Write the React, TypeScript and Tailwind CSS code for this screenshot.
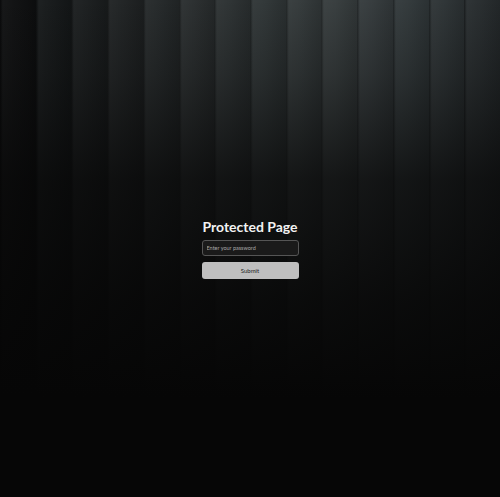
import { useState } from "react";

// top colour of each curtain fold, left → right
const STRIPES = [
  "bg-[#0e0f10]",
  "bg-[#151819]",
  "bg-[#1a1d1e]",
  "bg-[#1f2223]",
  "bg-[#242829]",
  "bg-[#292d2e]",
  "bg-[#2c3132]",
  "bg-[#2f3536]",
  "bg-[#33393a]",
  "bg-[#363c3d]",
  "bg-[#343a3c]",
  "bg-[#31383a]",
  "bg-[#2d3335]",
  "bg-[#272c2e]",
];

function Curtain() {
  return (
    <div className="pointer-events-none absolute inset-0 flex bg-[#060606]">
      {STRIPES.map((c, i) => (
        <div key={i} className={`relative h-full flex-1 ${c}`}>
          <div className="absolute inset-0 bg-[linear-gradient(to_right,rgba(0,0,0,0.35)_0%,rgba(255,255,255,0.04)_8%,rgba(255,255,255,0.02)_40%,rgba(0,0,0,0.12)_100%)]" />
        </div>
      ))}
      <div className="absolute inset-0 bg-[linear-gradient(to_bottom,rgba(6,6,6,0)_0%,rgba(6,6,6,0.25)_15%,rgba(6,6,6,0.72)_36%,rgba(6,6,6,0.9)_60%,#060606_80%)]" />
    </div>
  );
}

export default function App() {
  const [pw, setPw] = useState("");

  return (
    <div className="relative flex h-screen w-full items-center justify-center overflow-hidden font-['Lato',sans-serif]">
      <Curtain />
      <form
        className="relative z-10 flex w-[97px] flex-col"
        onSubmit={(e) => e.preventDefault()}
      >
        <h1 className="mb-[5px] text-center text-[14px] font-bold leading-[16px] whitespace-nowrap text-[#f2f2f2]">
          Protected Page
        </h1>
        <input
          type="password"
          value={pw}
          onChange={(e) => setPw(e.target.value)}
          placeholder="Enter your password"
          className="h-[16px] w-full rounded-[3px] border border-[#555555] bg-[#1a1a1a] px-[4px] text-[5.5px] text-[#dddddd] outline-none placeholder:text-[#a8a8a8]"
        />
        <button
          type="submit"
          className="mt-[6px] h-[17px] w-full rounded-[3px] bg-[#bfbfbf] text-[6px] text-[#222222]"
        >
          Submit
        </button>
      </form>
    </div>
  );
}
